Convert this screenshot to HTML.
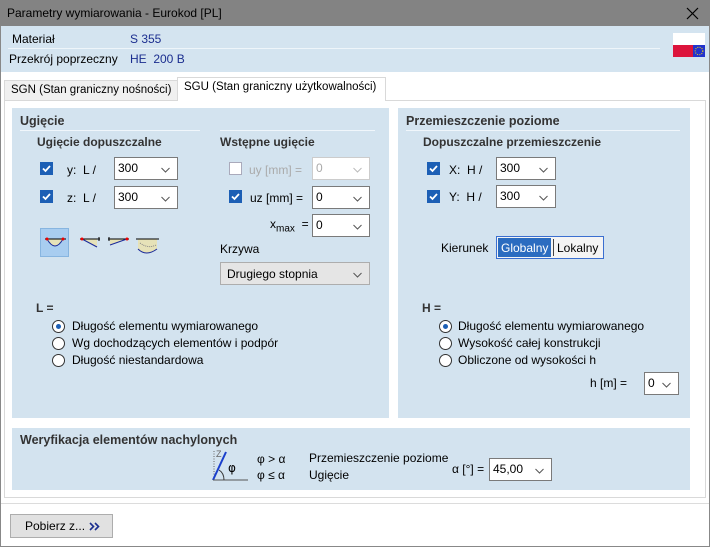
<!DOCTYPE html>
<html><head><meta charset="utf-8"><style>
*{margin:0;padding:0;box-sizing:border-box}
body{width:710px;height:547px;overflow:hidden;background:#fff;font-family:"Liberation Sans",sans-serif;font-size:12px;color:#000;position:relative}
.a{position:absolute;white-space:nowrap}
.b{font-weight:bold;color:#333}
.panel{position:absolute;background:#d3e3ef}
.line{position:absolute;height:1px;background:#f0f6fb}
.cb{position:absolute;width:13px;height:13px;background:#1c5fb5;border:1px solid #1c5fb5}
.cb svg{position:absolute;left:0;top:0}
.cbo{position:absolute;width:13px;height:13px;background:#fff;border:1px solid #aab}
.combo{position:absolute;background:#fff;border:1px solid #7a7a7a;height:23px;padding:3px 0 0 3px}
.combo.dis{border-color:#ccc;color:#aaa}
.combo svg{position:absolute;right:7px;top:9px}
.rad{position:absolute;width:13px;height:13px;border-radius:50%;border:1px solid #333;background:#fff}
.rad.on::after{content:"";position:absolute;left:3px;top:3px;width:5px;height:5px;border-radius:50%;background:#1c5fb5}
</style></head><body>
<div class="a" style="left:0;top:0;width:710px;height:26px;background:#838383"></div>
<div class="a" style="left:7px;top:6px;font-size:12px;color:#000">Parametry wymiarowania - Eurokod [PL]</div>
<svg class="a" style="left:686px;top:7px" width="13" height="13"><path d="M1 1L12 12M12 1L1 12" stroke="#000" stroke-width="1.2"/></svg>
<div class="a" style="left:0;top:26px;width:710px;height:521px;border:1px solid #888;border-top:none"></div>
<div class="a" style="left:1px;top:26px;width:708px;height:46px;background:#d4e4f0"></div>
<div class="a" style="left:12px;top:32px">Materiał</div>
<div class="a" style="left:130px;top:32px;color:#1b2e8f">S 355</div>
<div class="line" style="left:8px;top:48px;width:652px;background:#eef5fa"></div>
<div class="a" style="left:9px;top:52px">Przekrój poprzeczny</div>
<div class="a" style="left:130px;top:52px;color:#1b2e8f">HE&nbsp; 200 B</div>
<div class="a" style="left:673px;top:33px;width:32px;height:12px;background:#fff"></div>
<div class="a" style="left:673px;top:45px;width:20px;height:12px;background:#dc143c"></div>
<div class="a" style="left:693px;top:45px;width:12px;height:12px;background:#2233cc"></div>
<svg class="a" style="left:693px;top:45px" width="12" height="12"><circle cx="6" cy="6" r="3.8" fill="none" stroke="#ffdd00" stroke-width="1" stroke-dasharray="1 1.3"/></svg>
<!-- tabs -->
<div class="a" style="left:4px;top:80px;width:174px;height:21px;background:#f0f0f0;border:1px solid #d9d9d9;border-bottom:none"></div>
<div class="a" style="left:11px;top:84px;font-size:11.5px">SGN (Stan graniczny nośności)</div>
<div class="a" style="left:4px;top:100px;width:702px;height:398px;border:1px solid #d9d9d9"></div>
<div class="a" style="left:177px;top:77px;width:209px;height:24px;background:#fff;border:1px solid #d9d9d9;border-bottom:none"></div>
<div class="a" style="left:184px;top:81px;font-size:11.5px">SGU (Stan graniczny użytkowalności)</div>
<!-- left panel -->
<div class="panel" style="left:12px;top:108px;width:377px;height:310px"></div>
<div class="a b" style="left:20px;top:114px;font-size:12.5px">Ugięcie</div>
<div class="line" style="left:20px;top:130px;width:180px"></div>
<div class="line" style="left:220px;top:130px;width:155px"></div>
<div class="a b" style="left:37px;top:135px">Ugięcie dopuszczalne</div>
<div class="a b" style="left:220px;top:135px">Wstępne ugięcie</div>
<div class="cb" style="left:40px;top:162px"><svg width="11" height="11"><path d="M2 5.5L4.5 8L9 3" stroke="#fff" stroke-width="1.8" fill="none"/></svg></div>
<div class="a" style="left:67px;top:163px">y:&nbsp; L /</div>
<div class="combo" style="left:114px;top:157px;width:64px">300<svg width="9" height="6"><path d="M0.5 1L4.5 5L8.5 1" stroke="#555" fill="none"/></svg></div>
<div class="cb" style="left:40px;top:190px"><svg width="11" height="11"><path d="M2 5.5L4.5 8L9 3" stroke="#fff" stroke-width="1.8" fill="none"/></svg></div>
<div class="a" style="left:67px;top:191px">z:&nbsp; L /</div>
<div class="combo" style="left:114px;top:186px;width:64px">300<svg width="9" height="6"><path d="M0.5 1L4.5 5L8.5 1" stroke="#555" fill="none"/></svg></div>
<div class="a" style="left:40px;top:228px;width:29px;height:29px;background:#a8cdf0;border:1px solid #87b5e0"></div>
<svg class="a" style="left:40px;top:231px" width="130" height="30">
<path d="M7 8Q15 22 23 8Z" fill="#e6e2b8"/><path d="M5 8H26" stroke="#000"/><path d="M7 8Q15 22 23 8" stroke="#1a2a9a" fill="none"/><circle cx="7" cy="8" r="1.5" fill="#e00"/><circle cx="23" cy="8" r="1.5" fill="#e00"/>
<path d="M42 8L57 16V8Z" fill="#e6e2b8"/><path d="M40 8H60" stroke="#000"/><path d="M42 8L57 16" stroke="#1a2a9a"/><circle cx="42" cy="8" r="1.5" fill="#e00"/><path d="M59 6V10" stroke="#000"/>
<path d="M70 14L87 8H70Z" fill="#e6e2b8"/><path d="M68 8H89" stroke="#000"/><path d="M70 14L87 8" stroke="#1a2a9a"/><circle cx="87" cy="8" r="1.5" fill="#e00"/><path d="M69 6V10" stroke="#000"/>
<path d="M98 8V18Q106 26 117 18V8Z" fill="#e6e2b8"/><path d="M96 8H119" stroke="#000"/><path d="M98 18Q106 26 117 18" stroke="#1a2a9a" fill="none"/><path d="M100 12Q108 18 116 14" stroke="#888" stroke-dasharray="1 1" fill="none"/>
</svg>
<div class="cbo" style="left:229px;top:162px"></div>
<div class="a" style="left:249px;top:163px;color:#aaa">uy [mm] =</div>
<div class="combo dis" style="left:312px;top:157px;width:58px">0<svg width="9" height="6"><path d="M0.5 1L4.5 5L8.5 1" stroke="#bbb" fill="none"/></svg></div>
<div class="cb" style="left:229px;top:190px"><svg width="11" height="11"><path d="M2 5.5L4.5 8L9 3" stroke="#fff" stroke-width="1.8" fill="none"/></svg></div>
<div class="a" style="left:250px;top:191px">uz [mm] =</div>
<div class="combo" style="left:312px;top:186px;width:58px">0<svg width="9" height="6"><path d="M0.5 1L4.5 5L8.5 1" stroke="#555" fill="none"/></svg></div>
<div class="a" style="left:270px;top:217px">x<sub style="font-size:10px">max</sub>&nbsp; =</div>
<div class="combo" style="left:312px;top:214px;width:58px">0<svg width="9" height="6"><path d="M0.5 1L4.5 5L8.5 1" stroke="#555" fill="none"/></svg></div>
<div class="a" style="left:220px;top:242px">Krzywa</div>
<div class="combo" style="left:220px;top:262px;width:150px;background:#e5e5e5;border-color:#adadad;padding:4px 0 0 6px">Drugiego stopnia<svg width="9" height="6"><path d="M0.5 1L4.5 5L8.5 1" stroke="#555" fill="none"/></svg></div>
<div class="a b" style="left:36px;top:301px">L =</div>
<div class="rad on" style="left:52px;top:320px"></div><div class="a" style="left:72px;top:319px">Długość elementu wymiarowanego</div>
<div class="rad" style="left:52px;top:337px"></div><div class="a" style="left:72px;top:336px">Wg dochodzących elementów i podpór</div>
<div class="rad" style="left:52px;top:354px"></div><div class="a" style="left:72px;top:353px">Długość niestandardowa</div>
<!-- right panel -->
<div class="panel" style="left:398px;top:108px;width:292px;height:310px"></div>
<div class="a b" style="left:406px;top:114px;font-size:12.5px">Przemieszczenie poziome</div>
<div class="line" style="left:406px;top:130px;width:274px"></div>
<div class="a b" style="left:423px;top:135px">Dopuszczalne przemieszczenie</div>
<div class="cb" style="left:427px;top:162px"><svg width="11" height="11"><path d="M2 5.5L4.5 8L9 3" stroke="#fff" stroke-width="1.8" fill="none"/></svg></div>
<div class="a" style="left:449px;top:163px">X:&nbsp; H /</div>
<div class="combo" style="left:496px;top:157px;width:60px">300<svg width="9" height="6"><path d="M0.5 1L4.5 5L8.5 1" stroke="#555" fill="none"/></svg></div>
<div class="cb" style="left:427px;top:190px"><svg width="11" height="11"><path d="M2 5.5L4.5 8L9 3" stroke="#fff" stroke-width="1.8" fill="none"/></svg></div>
<div class="a" style="left:449px;top:190px">Y:&nbsp; H /</div>
<div class="combo" style="left:496px;top:185px;width:60px">300<svg width="9" height="6"><path d="M0.5 1L4.5 5L8.5 1" stroke="#555" fill="none"/></svg></div>
<div class="a" style="left:441px;top:241px">Kierunek</div>
<div class="a" style="left:496px;top:236px;width:108px;height:23px;border:1px solid #3b6fd0;background:#f4f4f4"></div>
<div class="a" style="left:498px;top:238px;width:53px;height:19px;background:#2b6cc0"></div>
<div class="a" style="left:501px;top:241px;color:#fff">Globalny</div>
<div class="a" style="left:553px;top:239px;width:1px;height:17px;background:#444"></div>
<div class="a" style="left:557px;top:241px">Lokalny</div>
<div class="a b" style="left:422px;top:301px">H =</div>
<div class="rad on" style="left:439px;top:320px"></div><div class="a" style="left:458px;top:319px">Długość elementu wymiarowanego</div>
<div class="rad" style="left:439px;top:337px"></div><div class="a" style="left:458px;top:336px">Wysokość całej konstrukcji</div>
<div class="rad" style="left:439px;top:354px"></div><div class="a" style="left:458px;top:353px">Obliczone od wysokości h</div>
<div class="a" style="left:590px;top:376px">h [m] =</div>
<div class="combo" style="left:644px;top:372px;width:35px">0<svg width="9" height="6"><path d="M0.5 1L4.5 5L8.5 1" stroke="#555" fill="none"/></svg></div>
<!-- bottom panel -->
<div class="panel" style="left:12px;top:428px;width:678px;height:62px"></div>
<div class="a b" style="left:20px;top:433px;font-size:12.5px">Weryfikacja elementów nachylonych</div>
<svg class="a" style="left:210px;top:448px" width="40" height="34">
<path d="M4 3V32" stroke="#666" stroke-dasharray="1 1.5"/><text x="6" y="9" font-size="9" fill="#666" font-family="Liberation Sans">Z</text>
<path d="M3 32L16 4" stroke="#1a3fcc" stroke-width="2"/><path d="M3 32H38" stroke="#555"/><path d="M9 22Q14 25 14 32" stroke="#333" fill="none"/>
<text x="18" y="24" font-size="12" fill="#000" font-family="DejaVu Sans">φ</text>
</svg>
<div class="a" style="left:257px;top:452px">φ &gt; α</div>
<div class="a" style="left:257px;top:468px">φ ≤ α</div>
<div class="a" style="left:309px;top:451px">Przemieszczenie poziome</div>
<div class="a" style="left:309px;top:468px">Ugięcie</div>
<div class="a" style="left:452px;top:462px">α [°] =</div>
<div class="combo" style="left:489px;top:458px;width:63px">45,00<svg width="9" height="6"><path d="M0.5 1L4.5 5L8.5 1" stroke="#555" fill="none"/></svg></div>
<!-- footer -->
<div class="a" style="left:1px;top:503px;width:708px;height:1px;background:#dcdcdc"></div>
<div class="a" style="left:10px;top:514px;width:103px;height:24px;background:#e1e1e1;border:1px solid #adadad"></div>
<div class="a" style="left:25px;top:519px">Pobierz z...</div>
<svg class="a" style="left:89px;top:522px" width="12" height="9"><path d="M1 1L4.5 4.5L1 8M6 1L9.5 4.5L6 8" stroke="#1b2e8f" stroke-width="1.6" fill="none"/></svg>
</body></html>
